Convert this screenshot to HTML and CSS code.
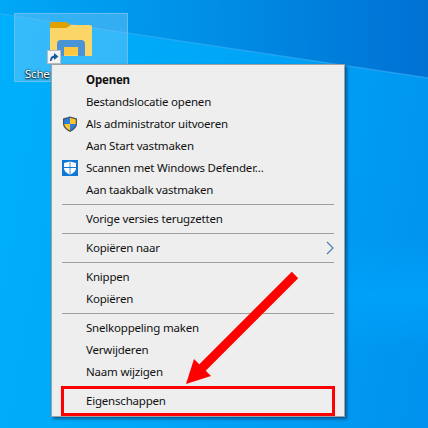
FILE: index.html
```html
<!DOCTYPE html>
<html lang="nl">
<head>
  <meta charset="UTF-8">
  <title>Eigenschappen</title>
  <link rel="stylesheet" href="styles.css">
</head>
<body>
  <div class="desktop">
    <!-- wallpaper light streaks -->
    <svg class="beams" width="428" height="428" viewBox="0 0 428 428">
      <defs>
        <linearGradient id="topShade" x1="0" y1="0" x2="1" y2="0">
          <stop offset="0" stop-color="#0088e0" stop-opacity="0.2"/>
          <stop offset="1" stop-color="#0072d4" stop-opacity="1"/>
        </linearGradient>
        <linearGradient id="glow" x1="0" y1="0" x2="0" y2="1">
          <stop offset="0" stop-color="#00a0f8" stop-opacity="0"/>
          <stop offset="0.5" stop-color="#00a2fa" stop-opacity="0.9"/>
          <stop offset="1" stop-color="#00a2fa" stop-opacity="0"/>
        </linearGradient>
      </defs>
      <path d="M0 0 H428 V78 L0 14 Z" fill="url(#topShade)"/>
      <path d="M0 14 L428 78" stroke="#38aef4" stroke-width="1.500" opacity="0.6" fill="none"/>
      <rect x="345" y="240" width="83" height="110" fill="url(#glow)"/>
    </svg>

    <div class="icon-box">
      <svg class="folder" width="44" height="44" viewBox="0 0 44 44">
        <path d="M1 8 V4 Q1 2 3 2 H17 L22 5 L17 8 Z" fill="#e0a000"/>
        <path d="M1 8 H17 L22 5 H41 Q43 5 43 7 V36 H1 Z" fill="#fbd568"/>
        <path d="M8 36 V24 Q8 20 12 20 H32 Q36 20 36 24 V36 H29 V27 H15 V36 Z" fill="#4a93d6"/>
        <rect x="15" y="27" width="14" height="8" fill="#fcc63e"/>
      </svg>
      <div class="shortcut">
        <svg width="10" height="10" viewBox="0 0 10 10">
          <path d="M1 9 Q1 4 5 3.500 V1 L9.500 4.500 L5 8 V6 Q3 6 2.500 9 Z" fill="#1c5a9c"/>
        </svg>
      </div>
      <span class="icon-label">Sche</span>
    </div>

    <div class="menu">
      <div class="menu-item bold">Openen</div>
      <div class="menu-item">Bestandslocatie openen</div>
      <div class="menu-item">
        <svg class="item-icon" width="16" height="16" viewBox="0 0 16 16">
          <path d="M8 0.500 L15 2.500 V8 Q15 12.500 8 16 Q1 12.500 1 8 V2.500 Z" fill="#45505c"/>
          <path d="M8 1.800 V8 H2.200 V3.400 Z" fill="#2b7fd8"/>
          <path d="M8 1.800 L13.800 3.400 V8 H8 Z" fill="#fcc630"/>
          <path d="M2.200 8 H8 V14.500 Q3 12 2.200 8 Z" fill="#fcc630"/>
          <path d="M8 8 H13.800 Q13 12 8 14.500 Z" fill="#2b7fd8"/>
        </svg>
        Als administrator uitvoeren
      </div>
      <div class="menu-item">Aan Start vastmaken</div>
      <div class="menu-item">
        <svg class="item-icon" width="16" height="16" viewBox="0 0 16 16">
          <rect width="16" height="16" fill="#0f78d4"/>
          <path d="M8 1.500 L14 3 V8 Q14 12 8 14.800 Q2 12 2 8 V3 Z" fill="#fff"/>
          <path d="M7.600 1.500 H8.400 V14.800 H7.600 Z M2 7.100 H14 V7.900 H2 Z" fill="#0f78d4"/>
        </svg>
        Scannen met Windows Defender...
      </div>
      <div class="menu-item">Aan taakbalk vastmaken</div>
      <div class="menu-sep"></div>
      <div class="menu-item">Vorige versies terugzetten</div>
      <div class="menu-sep"></div>
      <div class="menu-item">
        Kopiëren naar
        <svg class="chevron" width="8" height="14" viewBox="0 0 8 14">
          <path d="M1 1 L7 7 L1 13" fill="none" stroke="#4a80b8" stroke-width="1.200"/>
        </svg>
      </div>
      <div class="menu-sep"></div>
      <div class="menu-item">Knippen</div>
      <div class="menu-item">Kopiëren</div>
      <div class="menu-sep"></div>
      <div class="menu-item">Snelkoppeling maken</div>
      <div class="menu-item">Verwijderen</div>
      <div class="menu-item">Naam wijzigen</div>
      <div class="menu-sep"></div>
      <div class="menu-item">Eigenschappen</div>
    </div>

    <div class="highlight"></div>

    <svg class="arrow" width="428" height="428" viewBox="0 0 428 428">
      <path d="M295 275 L200 370" stroke="#f00" stroke-width="9" fill="none"/>
      <path d="M186 384 L194 359 L211 376 Z" fill="#f00"/>
    </svg>
  </div>
</body>
</html>
```

FILE: styles.css
```css
html, body {
  margin: 0;
  padding: 0;
}

.desktop {
  position: relative;
  width: 428px;
  height: 428px;
  overflow: hidden;
  font-family: "Noto Sans", "Open Sans", sans-serif;
  font-size: 11.5px;
  letter-spacing: -0.2px;
  background: linear-gradient(100deg, #00b0fa 0%, #00a8f8 40%, #0092ee 100%);
}

.beams {
  position: absolute;
  left: 0;
  top: 0;
}

.icon-box {
  position: absolute;
  left: 14px;
  top: 13px;
  width: 114px;
  height: 69px;
  box-sizing: border-box;
  border: 1px solid #66bdf4;
  background: rgba(150, 210, 250, 0.35);
  display: flex;
  flex-direction: column;
  align-items: center;
}

.folder {
  margin-top: 6px;
}

.shortcut {
  position: absolute;
  left: 32px;
  top: 36px;
  width: 12px;
  height: 12px;
  border: 1px solid #bbb;
  background: #f4f4f4;
  display: flex;
  align-items: center;
  justify-content: center;
}

.icon-label {
  position: absolute;
  left: 10px;
  top: 52px;
  color: #fff;
  white-space: nowrap;
  text-shadow: 0 0 2px #000, 0 1px 2px #000;
}

.menu {
  position: absolute;
  left: 51px;
  top: 64px;
  width: 294px;
  box-sizing: border-box;
  padding: 4px 0;
  background: #eeeeee;
  border: 1px solid #a0a0a0;
  box-shadow: 2px 2px 3px rgba(0, 40, 90, 0.6);
  color: #111;
}

.menu-item {
  position: relative;
  height: 22px;
  line-height: 22px;
  padding-left: 34px;
  white-space: nowrap;
}

.bold {
  font-weight: bold;
}

.menu-sep {
  height: 1px;
  margin: 3px 10px;
  background: #a0a0a0;
}

.item-icon {
  position: absolute;
  left: 10px;
  top: 3px;
}

.chevron {
  position: absolute;
  right: 10px;
  top: 4px;
}

.highlight {
  position: absolute;
  left: 61px;
  top: 386px;
  width: 274px;
  height: 30px;
  box-sizing: border-box;
  border: 3px solid #f00;
}

.arrow {
  position: absolute;
  left: 0;
  top: 0;
}
```
